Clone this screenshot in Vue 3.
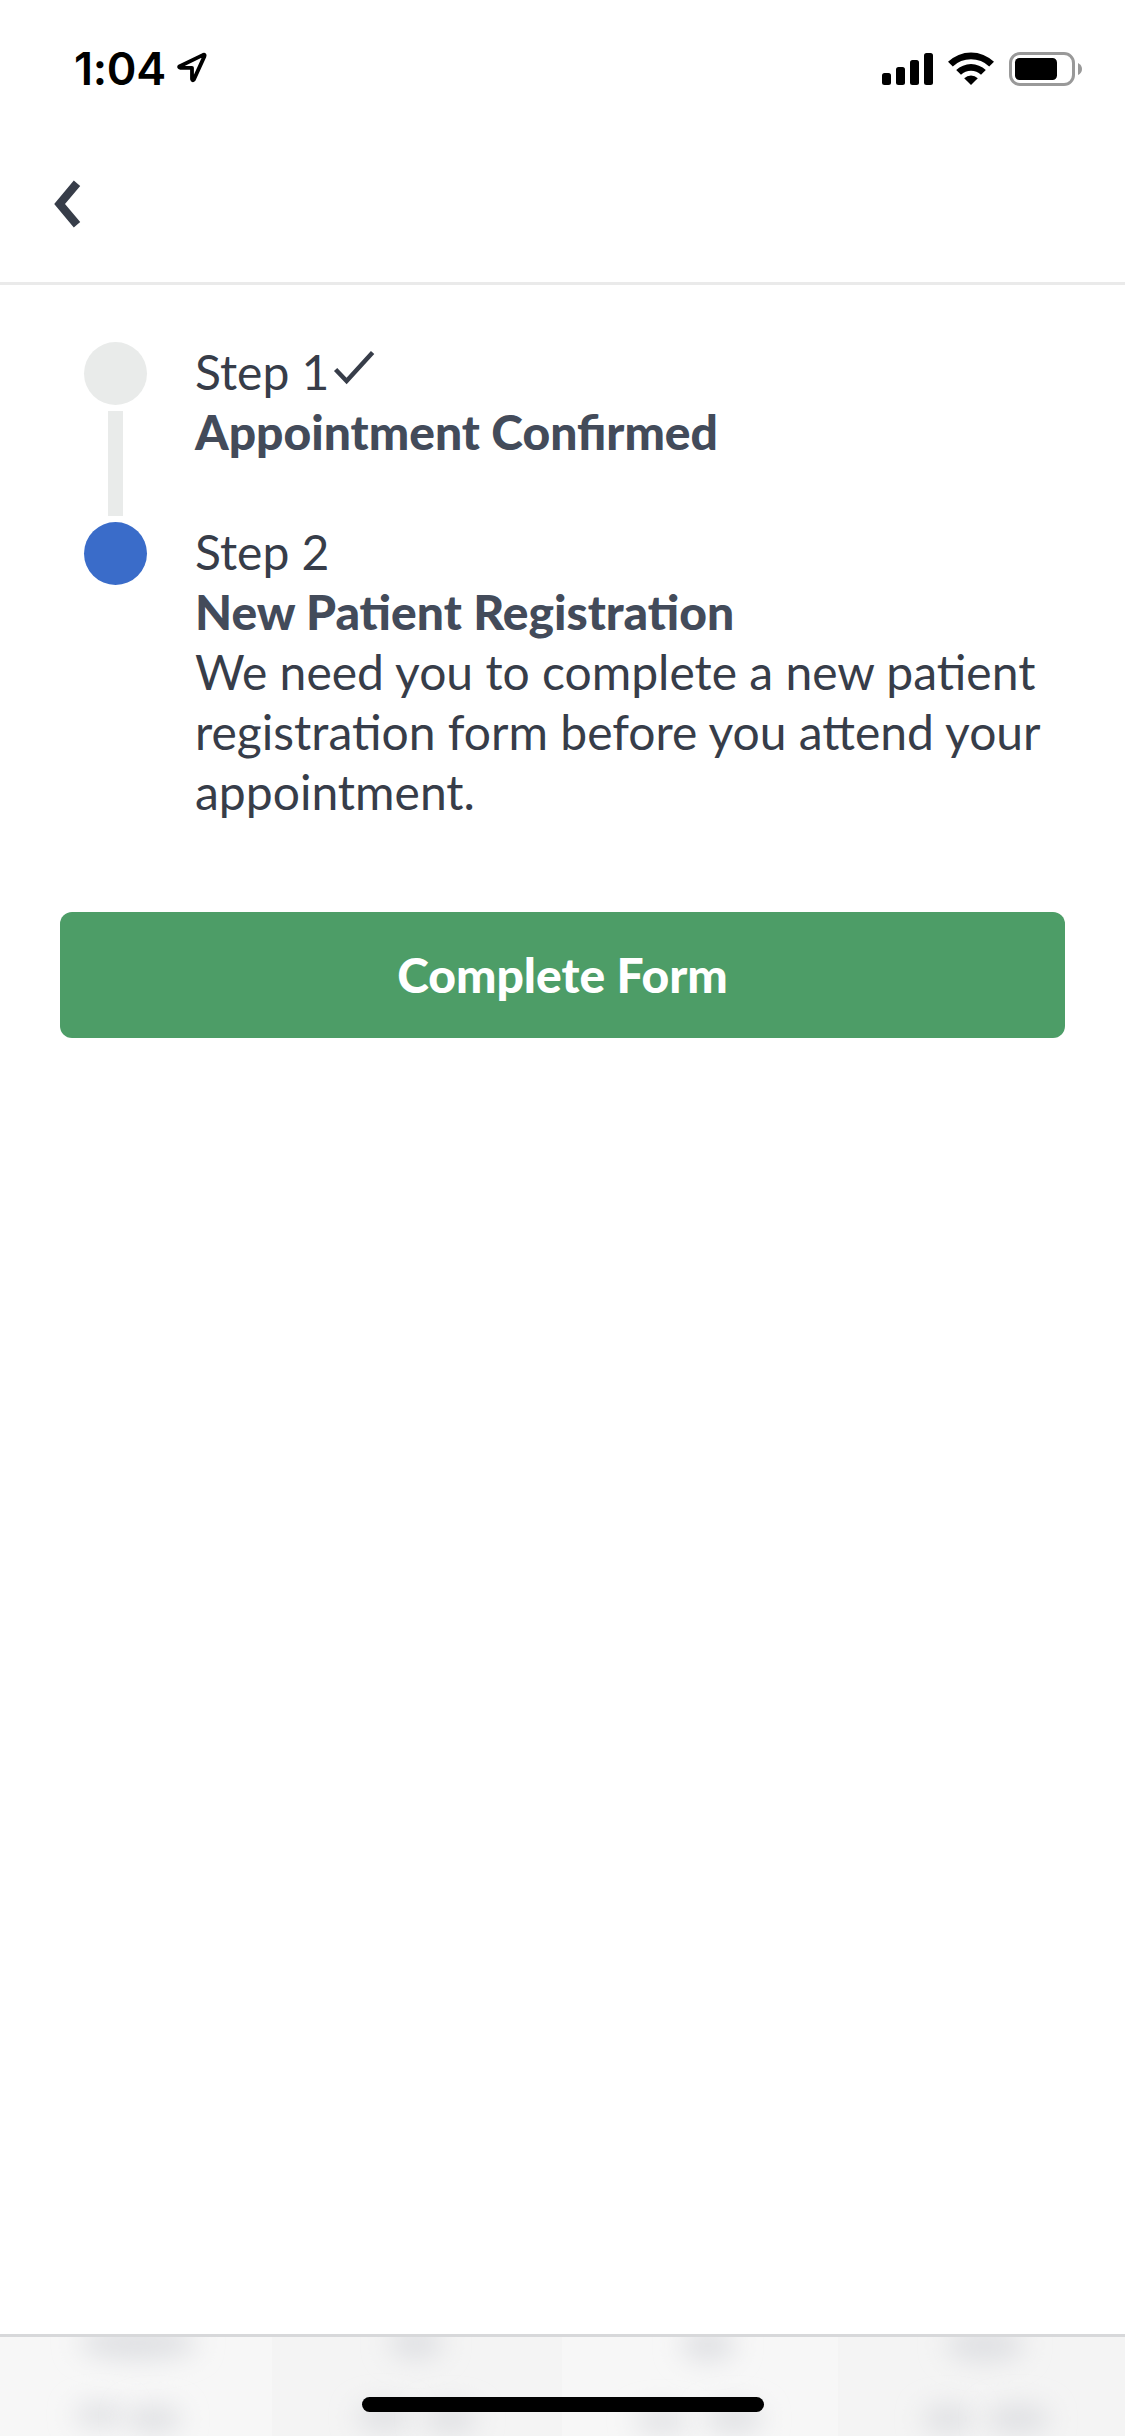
<script setup>
  import { ref } from 'vue';

  const time = ref("1:04");

  const steps = ref([
    { label: "Step 1", title: "Appointment Confirmed", text: "", done: true, active: false },
    {
      label: "Step 2",
      title: "New Patient Registration",
      text: "We need you to complete a new patient registration form before you attend your appointment.",
      done: false,
      active: true
    }
  ]);

  const shades = [
    { x: 138, y: 6, rx: 60, ry: 17 },
    { x: 100, y: 78, rx: 26, ry: 12 },
    { x: 154, y: 82, rx: 28, ry: 14 },
    { x: 416, y: 6, rx: 28, ry: 16 },
    { x: 384, y: 80, rx: 28, ry: 14 },
    { x: 450, y: 82, rx: 28, ry: 14 },
    { x: 708, y: 8, rx: 28, ry: 16 },
    { x: 662, y: 84, rx: 28, ry: 12 },
    { x: 734, y: 82, rx: 30, ry: 14 },
    { x: 985, y: 8, rx: 40, ry: 17 },
    { x: 948, y: 82, rx: 26, ry: 14 },
    { x: 1018, y: 82, rx: 32, ry: 15 }
  ];
</script>

<template>
  <div class="screen">
    <div class="status">
      <div class="status__left">
        <span class="status__time">{{ time }}</span>
        <svg class="status__location" width="30" height="32" viewBox="0 0 30 32">
          <path d="M2.8 14.2 L26.2 2.9 Q28.2 2.2 27.4 4.4 L16.8 27.6 Q15.6 29.2 15 27 V15.8 H3.6 Q1.2 15.2 2.8 14.2 Z" />
        </svg>
      </div>
      <div class="status__right">
        <svg width="51" height="34" viewBox="0 0 51 34">
          <rect x="0" y="21" width="9" height="12" rx="2.5" />
          <rect x="14" y="15" width="9" height="18" rx="2.5" />
          <rect x="28" y="8" width="9" height="25" rx="2.5" />
          <rect x="42" y="1" width="9" height="32" rx="2.5" />
        </svg>
        <svg width="46" height="34" viewBox="0 0 46 34">
          <path d="M0 9.8 A33 33 0 0 1 46 9.8 L41.2 14.6 A26 26 0 0 0 4.8 14.6 Z" />
          <path d="M8.2 18 A21.5 21.5 0 0 1 37.8 18 L33 22.8 A14.6 14.6 0 0 0 13 22.8 Z" />
          <path d="M16.2 26.2 A10 10 0 0 1 29.8 26.2 L23 33 Z" />
        </svg>
        <svg width="74" height="34" viewBox="0 0 74 34">
          <rect class="battery__frame" x="1.5" y="1.5" width="63" height="31" rx="9.5" />
          <rect x="6" y="6" width="42" height="22" rx="4.5" />
          <path class="battery__cap" d="M69 11 Q73 13 73 17 Q73 21 69 23 Z" />
        </svg>
      </div>
    </div>

    <header class="header">
      <svg class="header__back" width="27" height="48" viewBox="0 0 27 48">
        <path d="M19.8 0.6 L26.2 6 L11 24 L26.2 42 L19.8 47.6 L0.2 24 Z" />
      </svg>
    </header>

    <main class="content">
      <div class="steps">
        <div v-for="(step, i) in steps" :key="step.label" class="step">
          <div class="step__track">
            <div class="step__dot" :class="{ 'step__dot--active': step.active }"></div>
            <div v-if="i < steps.length - 1" class="step__line"></div>
          </div>
          <div class="step__body">
            <div class="step__label">
              <span>{{ step.label }}</span>
              <svg v-if="step.done" class="step__check" width="42" height="34" viewBox="0 0 42 34">
                <path d="M2.6 18.5 L13.6 30 L39.6 1.6" />
              </svg>
            </div>
            <div class="step__title">{{ step.title }}</div>
            <div v-if="step.text" class="step__text">{{ step.text }}</div>
          </div>
        </div>
      </div>
      <button class="button">Complete Form</button>
    </main>

    <footer class="tabbar">
      <svg class="tabbar__shades" width="1125" height="99" viewBox="0 0 1125 99">
        <defs>
          <filter id="soft" x="-100%" y="-200%" width="300%" height="500%">
            <feGaussianBlur stdDeviation="13" />
          </filter>
        </defs>
        <rect x="272" y="0" width="290" height="99" fill="#f4f4f4" />
        <rect x="838" y="0" width="287" height="99" fill="#f4f4f4" />
        <ellipse v-for="(s, i) in shades" :key="i" :cx="s.x" :cy="s.y" :rx="s.rx" :ry="s.ry" fill="#dfe0e3" filter="url(#soft)" />
      </svg>
      <div class="tabbar__home"></div>
    </footer>
  </div>
</template>

<style>
  body {
    margin: 0;
    background-color: white;
  }
</style>

<style scoped>
  .screen {
    display: flex;
    flex-direction: column;
    width: 1125px;
    height: 2436px;
    font-family: Lato, sans-serif;
    font-size: 48px;
    line-height: 60px;
    color: #373d49;
    background-color: white;
    overflow: hidden;
  }

  .status {
    display: flex;
    align-items: flex-start;
    justify-content: space-between;
    box-sizing: border-box;
    height: 132px;
    padding: 52px 42px 0 74px;
    color: black;
  }

  .status__left {
    display: flex;
    align-items: flex-start;
  }

  .status__time {
    margin-top: -13px;
    font-family: Inter, sans-serif;
    font-size: 45px;
    font-weight: 600;
    letter-spacing: -0.3px;
  }

  .status__location {
    margin-left: 11px;
    fill: none;
    stroke: black;
    stroke-width: 3.8;
    stroke-linejoin: round;
  }

  .status__right {
    display: flex;
    gap: 15px;
  }

  .battery__frame {
    fill: none;
    stroke: #999999;
    stroke-width: 3;
  }

  .battery__cap {
    fill: #999999;
  }

  .header {
    display: flex;
    align-items: flex-start;
    box-sizing: border-box;
    height: 153px;
    padding: 48px 54px 0;
    border-bottom: 3px solid #eaeaea;
  }

  .header__back {
    fill: #373d49;
  }

  .content {
    display: flex;
    flex-direction: column;
    flex-grow: 1;
    padding: 57px 60px 0;
  }

  .steps {
    padding: 0 12px 0 24px;
  }

  .step {
    display: flex;
    gap: 48px;
    min-height: 180px;
  }

  .step__track {
    display: flex;
    flex-direction: column;
    align-items: center;
    flex-shrink: 0;
    gap: 6px;
    width: 63px;
  }

  .step__dot {
    width: 63px;
    height: 63px;
    border-radius: 50%;
    background-color: #e9ebea;
  }

  .step__dot--active {
    background-color: #3a6cc9;
  }

  .step__line {
    width: 15px;
    height: 105px;
    background-color: #e9ebea;
  }

  .step__label {
    display: flex;
    align-items: flex-start;
    height: 60px;
  }

  .step__check {
    margin-top: 9px;
    margin-left: 4px;
    fill: none;
    stroke: #373d49;
    stroke-width: 4.5;
  }

  .step__title {
    font-weight: 900;
    color: #434b5a;
  }

  .button {
    height: 126px;
    margin-top: 90px;
    padding: 0;
    font-family: inherit;
    font-size: 48px;
    font-weight: 900;
    line-height: 60px;
    color: white;
    border: none;
    border-radius: 12px;
    background-color: #4d9d67;
  }

  .tabbar {
    display: grid;
    justify-items: center;
    height: 99px;
    border-top: 3px solid #d7d8da;
    background-color: #f7f7f7;
    overflow: hidden;
  }

  .tabbar__shades,
  .tabbar__home {
    grid-area: 1 / 1;
  }

  .tabbar__home {
    z-index: 1;
    width: 402px;
    height: 15px;
    margin-top: 60px;
    border-radius: 8px;
    background-color: black;
  }
</style>
